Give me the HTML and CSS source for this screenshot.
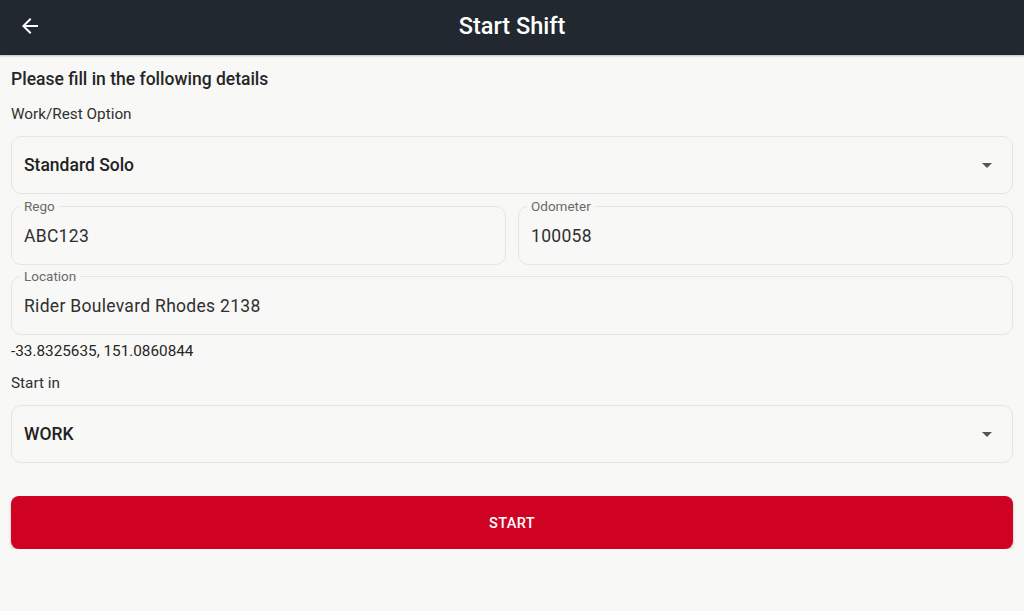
FILE: index.html
```html
<!DOCTYPE html>
<html lang="en">
<head>
<meta charset="UTF-8">
<meta name="viewport" content="width=device-width, initial-scale=1.0">
<title>Start Shift</title>
<link rel="stylesheet" href="styles.css">
</head>
<body>
<header class="appbar">
    <button class="back" aria-label="Back">
        <svg width="24" height="24" viewBox="0 0 24 24"><path d="M20 11H7.83l5.59-5.59L12 4l-8 8 8 8 1.41-1.41L7.83 13H20v-2z" fill="#fff"/></svg>
    </button>
    <h1 class="title">Start Shift</h1>
</header>

<main class="form">
    <h2 class="heading">Please fill in the following details</h2>

    <div class="label">Work/Rest Option</div>
    <div class="select">
        <span>Standard Solo</span>
        <span class="caret"></span>
    </div>

    <div class="row">
        <div class="field">
            <span class="field-label">Rego</span>
            <span class="field-value">ABC123</span>
        </div>
        <div class="field">
            <span class="field-label">Odometer</span>
            <span class="field-value">100058</span>
        </div>
    </div>

    <div class="field location">
        <span class="field-label">Location</span>
        <span class="field-value">Rider Boulevard Rhodes 2138</span>
    </div>

    <div class="coords">-33.8325635, 151.0860844</div>

    <div class="label">Start in</div>
    <div class="select">
        <span>WORK</span>
        <span class="caret"></span>
    </div>

    <button class="start">START</button>
</main>
</body>
</html>
```

FILE: styles.css
```css
body {
    margin: 0;
    background-color: #f8f8f7;
    font-family: Roboto, "Noto Sans", sans-serif;
    color: #212121;
}

.appbar {
    height: 55px;
    background-color: #212830;
    display: flex;
    align-items: center;
    justify-content: center;
    position: relative;
    box-shadow: 0 1px 2px rgba(0, 0, 0, 0.25);
}

.back {
    position: absolute;
    left: 18px;
    top: 14px;
    padding: 0;
    border: none;
    background: none;
    width: 24px;
    height: 24px;
    display: flex;
}

.title {
    margin: 0;
    color: #fff;
    font-size: 23.5px;
    font-weight: 500;
    line-height: 28px;
    padding-bottom: 4px;
}

.form {
    padding: 13px 11px 0;
    display: flex;
    flex-direction: column;
}

.heading {
    margin: 0;
    font-size: 17.5px;
    font-weight: 500;
    line-height: 22px;
    color: #262626;
}

.label {
    font-size: 15.3px;
    line-height: 18px;
    color: #303030;
    margin-top: 15px;
}

.label + .select {
    margin-top: 13px;
}

.coords + .label {
    margin-top: 14px;
}

.select {
    height: 58px;
    box-sizing: border-box;
    border: 1px solid #e5e5e5;
    border-radius: 10px;
    display: flex;
    align-items: center;
    justify-content: space-between;
    padding: 0 20px 0 12px;
    font-size: 17.5px;
    font-weight: 500;
    color: #222;
}

.caret {
    width: 0;
    height: 0;
    border-left: 5px solid transparent;
    border-right: 5px solid transparent;
    border-top: 5px solid #555;
}

.row {
    display: flex;
    gap: 12px;
    margin-top: 12px;
}

.row .field {
    flex: 1;
}

.field {
    position: relative;
    height: 59px;
    box-sizing: border-box;
    border: 1px solid #e5e5e5;
    border-radius: 10px;
    display: flex;
    align-items: center;
    padding: 0 12px;
}

.field-label {
    position: absolute;
    top: -8px;
    left: 8px;
    padding: 0 4px;
    background-color: #f8f8f7;
    font-size: 13.5px;
    line-height: 14px;
    color: #6a6a6a;
}

.field-value {
    font-size: 17.5px;
    letter-spacing: 0.3px;
    color: #303030;
}

.location {
    margin-top: 11px;
}

.coords {
    margin-top: 7px;
    font-size: 15.3px;
    line-height: 18px;
    color: #262626;
}

.start {
    margin-top: 33px;
    height: 53px;
    border: none;
    border-radius: 8px;
    background-color: #d00223;
    color: #fff;
    font-family: Roboto, "Noto Sans", sans-serif;
    font-size: 14.6px;
    font-weight: 500;
    letter-spacing: 0.3px;
    box-shadow: 0 2px 3px rgba(0, 0, 0, 0.25);
}
```
